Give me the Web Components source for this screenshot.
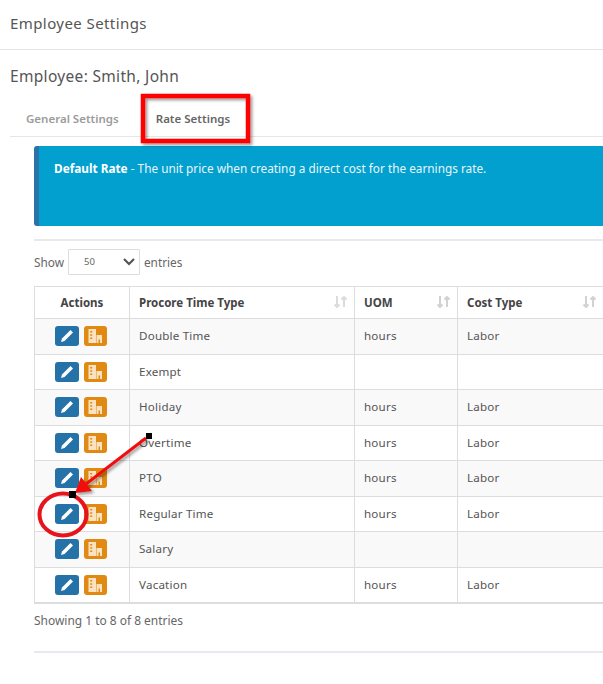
<!DOCTYPE html>
<html>
<head>
<meta charset="utf-8">
<title>Employee Settings</title>
<style>
  html, body { margin: 0; padding: 0; background: #fff; }
  body { width: 603px; height: 684px; overflow: hidden; position: relative; font-family: "Noto Sans", "Open Sans", sans-serif; color: #555; }
</style>
</head>
<body>
<page-header>Employee Settings</page-header>
<employee-title>Employee: Smith, John</employee-title>
<tab-bar>
  <tab-item>General Settings</tab-item>
  <tab-item active>Rate Settings</tab-item>
</tab-bar>
<section-body>
  <info-alert><b>Default Rate</b> - The unit price when creating a direct cost for the earnings rate.</info-alert>
  <length-select></length-select>
  <rate-table></rate-table>
  <table-info>Showing 1 to 8 of 8 entries</table-info>
</section-body>
<call-outs></call-outs>

<script>
(function () {
  function define(name, css, html, init) {
    customElements.define(name, class extends HTMLElement {
      constructor() {
        super();
        this.attachShadow({ mode: "open" });
        this.shadowRoot.innerHTML = `<style>${css}</style>${html}`;
        if (init) init.call(this);
      }
    });
  }

  define("page-header", `
    :host { display: flex; align-items: center; height: 50px; padding: 0 0 4px 10px; box-sizing: border-box;
      border-bottom: 1px solid #e3e3e3; font-size: 15px; letter-spacing: .42px; color: #555; }
  `, `<slot></slot>`);

  define("employee-title", `
    :host { display: block; padding: 17px 0 0 10px; height: 46px; box-sizing: border-box;
      font-size: 15.5px; letter-spacing: .32px; line-height: 18px; color: #555; }
  `, `<slot></slot>`);

  define("tab-bar", `
    :host { display: flex; height: 41px; margin-left: 10px; gap: 0; border-bottom: 1px solid #e6e6e6; box-sizing: border-box; }
  `, `<slot></slot>`);

  define("tab-item", `
    :host { display: flex; align-items: center; padding: 5px 16px 0; font-size: 11.5px; font-weight: 600; color: #9b9b9b; white-space: nowrap; }
    :host([active]) { color: #666; padding-left: 21px; }
  `, `<slot></slot>`);

  define("section-body", `
    :host { display: block; padding: 9px 0 0 34px; overflow: hidden; }
  `, `<slot></slot>`);

  define("info-alert", `
    :host { display: block; height: 80px; box-sizing: border-box; padding: 14px 0 0 15px; background: #01a0cf;
      border-left: 5px solid #2a72a8; border-radius: 3px 0 0 3px; color: #e8f6fb; font-size: 11.8px; line-height: 16px; white-space: nowrap; }
    ::slotted(b) { font-weight: 700; color: #fff; }
  `, `<slot></slot>`);

  define("length-select", `
    :host { display: flex; align-items: center; gap: 4px; height: 47px; margin-top: 13px; padding-bottom: 4px; border-top: 2px solid #e8e8ee;
      box-sizing: border-box; font-size: 11.8px; color: #666; }
    .box { width: 72px; height: 26px; box-sizing: border-box; border: 1px solid #ddd; border-radius: 1px;
      display: flex; align-items: center; justify-content: space-between; padding: 0 3px 0 15px; font-size: 9.5px; }
    svg { display: block; }
  `, `Show <div class="box"><span>50</span>
      <svg width="14" height="9" viewBox="0 0 14 9"><path d="M2 2l5 5 5-5" fill="none" stroke="#555" stroke-width="2.2"/></svg>
    </div> entries`);

  const sortIcon = (dim) => `<svg class="sort" width="16" height="12" viewBox="0 0 16 12" fill="none" stroke="${dim ? "#dcdcdc" : "#d2d2d2"}" stroke-width="2">
    <path d="M4 0v11M1.500 8.500L4 11l2.500-2.500M11 11V1M8.500 3.500L11 1l2.500 2.500"/></svg>`;

  const pencil = `<svg width="16" height="16" viewBox="0 0 16 16"><path d="M11.500 2l2.500 2.500-8.500 8.500-3.500 1 1-3.500z" fill="#fff"/></svg>`;
  const building = `<svg width="16" height="16" viewBox="0 0 16 16">
    <path d="M1.500 1h7.500v14h-7.500z" fill="#fbe3c2"/>
    <path d="M9.500 7h5.500v8h-2v-3.500h-1.500v3.500h-2z" fill="#fbe3c2"/>
    <path d="M3.200 3h2v1.500h-2zM3.200 6.300h2v1.500h-2zM3.200 9.600h2v1.500h-2z" fill="#e08a14"/>
  </svg>`;

  const rows = [
    ["Double Time", "hours", "Labor"],
    ["Exempt", "", ""],
    ["Holiday", "hours", "Labor"],
    ["Overtime", "hours", "Labor"],
    ["PTO", "hours", "Labor"],
    ["Regular Time", "hours", "Labor"],
    ["Salary", "", ""],
    ["Vacation", "hours", "Labor"],
  ];

  define("rate-table", `
    :host { display: block; width: 640px; box-sizing: border-box; border: solid #ddd; border-width: 1px 0 2px 1px; font-size: 11.6px; letter-spacing: .2px; color: #555; }
    .row { display: grid; grid-template-columns: 95px 225px 103px 146px; height: 35.5px; border-top: 1px solid #ddd; box-sizing: border-box; background: #fff; }
    .row.head { height: 31px; border-top: 0; font-size: 11.5px; letter-spacing: 0; font-weight: 700; color: #444; }
    .row.odd { background: #f9f9f9; }
    .cell { display: flex; align-items: center; justify-content: space-between; padding: 0 10px 1px 9px; border-right: 1px solid #ddd; white-space: nowrap; min-width: 0; }
    .cell.act { justify-content: center; padding: 0; }
    .cell.btns { gap: 5px; padding-right: 3px; }
    .btn { display: flex; align-items: center; justify-content: center; height: 20px; border-radius: 3px; }
    .edit { width: 24px; background: #2572a8; }
    .rate { width: 23px; background: #e08a14; }
    .sort { flex: none; margin-right: -5px; }
  `, `<div class="row head">
      <div class="cell act">Actions</div>
      <div class="cell">Procore Time Type ${sortIcon(true)}</div>
      <div class="cell">UOM ${sortIcon()}</div>
      <div class="cell">Cost Type ${sortIcon()}</div>
    </div>` + rows.map((r, i) => `<div class="row ${i % 2 ? "" : "odd"}">
      <div class="cell act btns"><span class="btn edit">${pencil}</span><span class="btn rate">${building}</span></div>
      <div class="cell">${r[0]}</div>
      <div class="cell">${r[1]}</div>
      <div class="cell">${r[2]}</div>
    </div>`).join(""));

  define("table-info", `
    :host { display: block; height: 49px; padding-top: 9px; box-sizing: border-box; border-bottom: 2px solid #e8e8ee;
      font-size: 11.95px; line-height: 16px; color: #666; }
  `, `<slot></slot>`);

  // red markup drawn over the screenshot
  define("call-outs", `
    :host { position: absolute; left: 0; top: 0; width: 603px; height: 684px; pointer-events: none; }
    svg { display: block; }
  `, `<svg width="603" height="684" viewBox="0 0 603 684">
      <defs><filter id="sh" x="-20%" y="-20%" width="140%" height="140%"><feDropShadow dx="2" dy="2" stdDeviation="1.500" flood-color="#000" flood-opacity=".4"/></filter></defs>
      <rect x="143" y="96" width="105" height="45" fill="none" stroke="#f00" stroke-width="4.500" filter="url(#sh)"/>
      <g filter="url(#sh)">
        <path d="M146 438L86 484" stroke="#f01010" stroke-width="3" fill="none"/>
        <path d="M75 493l6-16 11 14z" fill="#f01010"/>
      </g>
      <ellipse cx="63" cy="514.500" rx="23.500" ry="21" fill="none" stroke="#e8141c" stroke-width="4"/>
      <rect x="146" y="433" width="6" height="6" fill="#000"/>
      <rect x="69" y="491" width="7" height="7" fill="#000"/>
    </svg>`);
})();
</script>
</body>
</html>
